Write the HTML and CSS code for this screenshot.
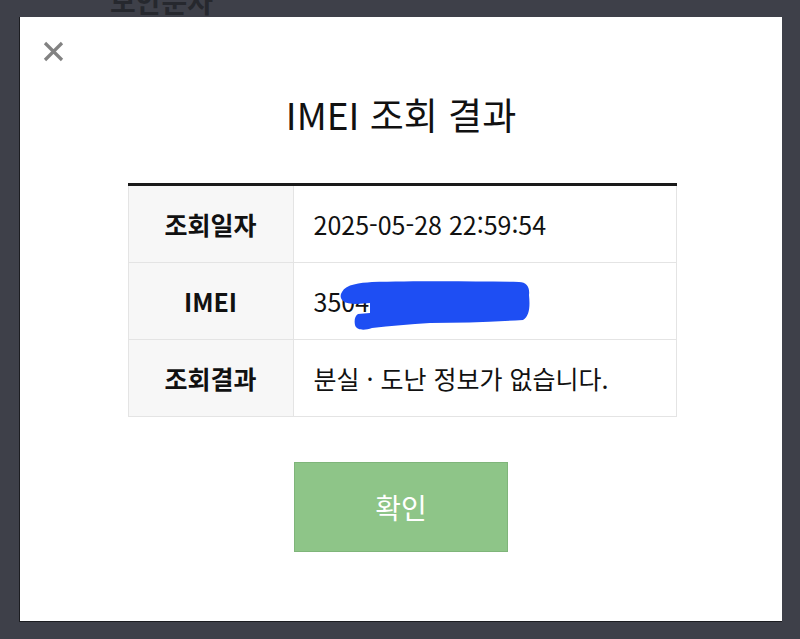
FILE: index.html
```html
<!DOCTYPE html>
<html lang="ko">
<head>
<meta charset="utf-8">
<link rel="stylesheet" href="styles.css">
</head>
<body>
<div class="behind"><span class="behind-text">보안문자</span></div>
<div class="modal">
  <div class="close" aria-label="닫기">
    <svg width="21" height="21" viewBox="0 0 21 21"><path d="M2 2 L19 19 M19 2 L2 19" stroke="#828282" stroke-width="3.2" fill="none"/></svg>
  </div>
  <h1 class="title">IMEI 조회 결과</h1>
  <table class="result">
    <tr>
      <th>조회일자</th>
      <td>2025-05-28 22:59:54</td>
    </tr>
    <tr>
      <th>IMEI</th>
      <td class="imei">3504
        <svg class="scribble" width="210" height="55" viewBox="0 0 210 55"><path d="M12 14 C16 6 30 5 42 4 C80 3 140 3 189 4 C197 4 200 10 199 17 C200 27 200 38 193 42 C160 44 130 45 100 45 C80 46 60 48 42 50 C34 53 26 52 25 47 C24 42 25 38 28 36 L40 35 L40 25 C30 26 18 27 13 23 C10 20 10 17 12 14 Z" fill="#1e4ef3"/></svg>
      </td>
    </tr>
    <tr>
      <th>조회결과</th>
      <td>분실 · 도난 정보가 없습니다.</td>
    </tr>
  </table>
  <div class="actions">
    <button class="confirm" type="button">확인</button>
  </div>
</div>
</body>
</html>
```
FILE: styles.css
```css
html, body {
  margin: 0;
  padding: 0;
}
body {
  background: #3e4049;
  width: 800px;
  height: 639px;
  overflow: hidden;
  font-family: "Noto Sans CJK KR", "Noto Sans", sans-serif;
}
.behind {
  height: 17px;
  overflow: hidden;
  padding-left: 110px;
}
.behind-text {
  display: block;
  margin-top: -19px;
  font-size: 28px;
  line-height: 40px;
  font-weight: 700;
  color: #26282e;
}
.modal {
  margin-left: 19px;
  width: 763px;
  height: 605px;
  box-sizing: border-box;
  background: #ffffff;
  border-left: 1px solid #1c1d21;
  border-bottom: 1px solid #1c1d21;
  padding-top: 24px;
  display: flex;
  flex-direction: column;
  align-items: center;
}
.close {
  align-self: flex-start;
  margin-left: 23px;
  width: 21px;
  height: 21px;
}
.close svg {
  display: block;
}
.title {
  margin: 27px 0 0;
  font-size: 37px;
  line-height: 50px;
  font-weight: 400;
  color: #111111;
  letter-spacing: 0;
}
.result {
  margin-top: 44px;
  margin-left: 2px;
  width: 549px;
  border-collapse: collapse;
  border-top: 3px solid #1a1a1a;
}
.result th,
.result td {
  height: 76px;
  border: 1px solid #e4e4e4;
  font-size: 25px;
  color: #111111;
  padding: 0;
}
.result tr:first-child th,
.result tr:first-child td {
  border-top: none;
}
.result th {
  width: 164px;
  background: #f7f7f7;
  font-weight: 700;
  text-align: center;
}
.result td {
  padding-left: 20px;
  font-weight: 400;
  text-align: left;
}
.imei {
  position: relative;
}
.scribble {
  position: absolute;
  left: 36px;
  top: 15px;
}
.actions {
  margin-top: 45px;
}
.confirm {
  width: 214px;
  height: 90px;
  background: #8ec588;
  border: 1px solid #7fb57a;
  color: #ffffff;
  font-family: "Noto Sans CJK KR", "Noto Sans", sans-serif;
  font-size: 28px;
  font-weight: 400;
  padding: 0;
  cursor: pointer;
}
```
